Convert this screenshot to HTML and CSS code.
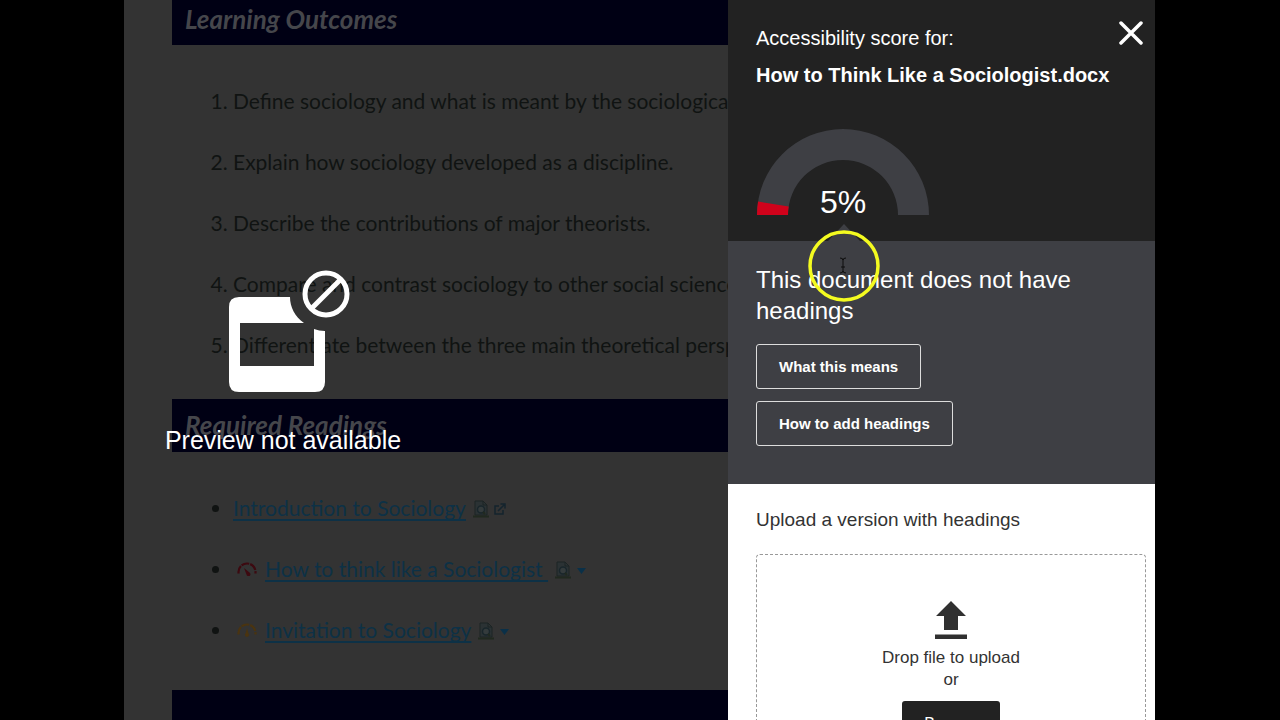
FILE: index.html
```html
<!DOCTYPE html>
<html lang="en">
<head>
<meta charset="utf-8">
<title>Accessibility score</title>
<link rel="stylesheet" href="styles.css">
</head>
<body>
<svg class="defs" aria-hidden="true">
  <symbol id="file" viewBox="0 0 16 18">
    <path d="M2 1h8l4 4v10H2z" fill="#2b3234" stroke="#1c2424"/>
    <path d="M10 1v4h4" fill="none" stroke="#1c2424"/>
    <circle cx="8" cy="9.500" r="3.500" fill="#343b3c" stroke="#19262b" stroke-width="1.500"/>
    <path d="M10 12l2 2M0 16.500h16" stroke="#20291f" stroke-width="2"/>
  </symbol>
  <symbol id="caret" viewBox="0 0 9 6"><path d="M0 0h9L4.500 6z" fill="#0a3048"/></symbol>
</svg>
<div class="stage">
  <main class="course">
    <section>
      <h2 class="bar bar-first">Learning Outcomes</h2>
      <ol class="list outcomes">
        <li>Define sociology and what is meant by the sociological</li>
        <li>Explain how sociology developed as a discipline.</li>
        <li>Describe the contributions of major theorists.</li>
        <li>Compare and contrast sociology to other social science</li>
        <li>Differentiate between the three main theoretical persp</li>
      </ol>
    </section>
    <section>
      <h2 class="bar">Required Readings</h2>
      <ul class="list readings">
        <li><div class="row"><a href="#intro">Introduction to Sociology</a>
          <svg class="file" aria-hidden="true"><use href="#file"/></svg>
          <svg class="ext" viewBox="0 0 12 12" aria-hidden="true"><path d="M5 3H1v8h8V7M4 8l6-6M6.500 1H11v4.500" fill="none" stroke="#14242e" stroke-width="1.500"/></svg></div></li>
        <li><div class="row"><svg class="gauge-icon" viewBox="0 0 20 14" aria-hidden="true"><path d="M1.500 11.500V10a8.500 8.500 0 0 1 17 0v1.500" fill="none" stroke="#3d0910" stroke-width="2.200" stroke-dasharray="8 1"/><path d="M7 6l5.500 4.500a2 2 0 1 1-3 2z" fill="#3d0910"/></svg>
          <a class="after-gauge trailing" href="#think">How to think like a Sociologist </a>
          <svg class="file" aria-hidden="true"><use href="#file"/></svg>
          <svg class="caret" aria-hidden="true"><use href="#caret"/></svg></div></li>
        <li><div class="row"><svg class="gauge-icon" viewBox="0 0 20 14" aria-hidden="true"><path d="M1.500 11.500V10a8.500 8.500 0 0 1 17 0v1.500" fill="none" stroke="#4a3410" stroke-width="2.200" stroke-dasharray="8 1"/><path d="M10 5l1.500 5.500a2 2 0 1 1-3 0z" fill="#4a3410"/></svg>
          <a class="after-gauge" href="#invite">Invitation to Sociology</a>
          <svg class="file" aria-hidden="true"><use href="#file"/></svg>
          <svg class="caret" aria-hidden="true"><use href="#caret"/></svg></div></li>
      </ul>
    </section>
    <div class="bar"></div>
    <div class="preview">
      <svg class="preview-icon" viewBox="0 0 122 124" aria-hidden="true">
        <path fill="#fff" fill-rule="evenodd" d="M10 27H61C61 37 66 47 75 53H11V96H85V59Q90 61 96 61V112Q96 122 86 122H10Q0 122 0 112V37Q0 27 10 27Z"/>
        <circle cx="97" cy="24" r="21" fill="none" stroke="#fff" stroke-width="5"/>
        <path d="M82 39l30-30" stroke="#fff" stroke-width="5"/>
      </svg>
      <p class="preview-text">Preview not available</p>
    </div>
  </main>
  <aside class="panel">
    <header class="score">
      <div class="score-top">
        <h1 class="score-title">Accessibility score for:<strong>How to Think Like a Sociologist.docx</strong></h1>
        <button class="close" type="button" aria-label="Close"><svg viewBox="0 0 24 24"><path d="M2 2l20 20M22 2L2 22" stroke="#fff" stroke-width="3.500" stroke-linecap="round"/></svg></button>
      </div>
      <div class="meter">
        <svg viewBox="0 0 172 86" aria-hidden="true">
          <path d="M0 86A86 86 0 0 1 172 86H141A55 55 0 0 0 31 86Z" fill="#3e3f44"/>
          <path d="M0 86A86 86 0 0 1 1.060 72.500L31.700 77.400A55 55 0 0 0 31 86Z" fill="#d0021b"/>
        </svg>
        <span class="percent">5%</span>
      </div>
    </header>
    <section class="issue">
      <h2 class="issue-title">This document does not have headings</h2>
      <button class="outline" type="button">What this means</button>
      <button class="outline" type="button">How to add headings</button>
    </section>
    <section class="upload">
      <h2 class="upload-title">Upload a version with headings</h2>
      <div class="drop">
        <svg class="upload-icon" viewBox="0 0 32 38" aria-hidden="true"><path d="M16 0L31 15H23V29H9V15H1ZM0 33.500H32V38H0Z" fill="#303030"/></svg>
        <p>Drop file to upload<br>or</p>
        <button class="browse" type="button">Browse</button>
      </div>
    </section>
    <svg class="cursor" viewBox="0 0 72 72" aria-hidden="true">
      <circle cx="36" cy="36" r="34" fill="none" stroke="#f4fb20" stroke-width="3.500"/>
      <path d="M32 28q3 0 3 2q0-2 3-2M32 43q3 0 3-2q0 2 3 2M35 29v13M33 37h4" fill="none" stroke="#0c0c0c"/>
    </svg>
  </aside>
</div>
</body>
</html>
```
FILE: styles.css
```css
* { box-sizing: border-box; }
body {
  margin: 0;
  height: 100vh;
  overflow: hidden;
  background: #000;
  font-family: "Liberation Sans", Arial, sans-serif;
}
h1, h2, p { margin: 0; font-weight: 400; }
button { font-family: inherit; cursor: pointer; }
svg { display: block; flex: none; }
.defs { display: none; }

.stage {
  display: grid;
  grid-template-columns: minmax(0, 1fr) 427px;
  height: 100%;
  padding: 0 125px 0 124px;
}

/* Dimmed course page */
.course {
  position: relative;
  overflow: hidden;
  padding-left: 48px;
  background: #333;
  color: #101312;
  font-family: Lato, sans-serif;
}
.bar {
  height: 53px;
  padding: 0 13px;
  background: #000014;
  color: #45464b;
  font-size: 26px;
  font-weight: 700;
  font-style: italic;
  line-height: 53px;
}
.bar-first { height: 45px; line-height: 38px; }
.list {
  display: flex;
  flex-direction: column;
  gap: 36px;
  margin: 0;
  padding: 43px 0 42px 61px;
  font-size: 21px;
  line-height: 25px;
  white-space: nowrap;
}
.readings { padding-bottom: 48px; }
.row { display: flex; align-items: baseline; height: 25px; }
.row svg { align-self: center; }
.readings a {
  color: #0d3146;
  text-decoration: underline;
  text-decoration-thickness: 2px;
  text-underline-offset: 3px;
  text-decoration-skip-ink: none;
}
.trailing { white-space: pre; }
.gauge-icon { width: 20px; height: 14px; margin-left: 4px; }
.after-gauge { margin-left: 8px; }
.file { width: 16px; height: 18px; margin: 3px 0 0 7px; }
.ext { width: 12px; height: 12px; margin: 3px 0 0 5px; }
.caret { width: 9px; height: 6px; margin: 5px 0 0 6px; }

.preview {
  position: absolute;
  top: 270px;
  left: 0;
  width: 318px;
  color: #fff;
  font-family: "Liberation Sans", Arial, sans-serif;
}
.preview-icon { width: 122px; height: 124px; margin: 0 auto 0 105px; }
.preview-text {
  margin-top: 30px;
  font-size: 25px;
  line-height: 32px;
  text-align: center;
}

/* Score panel */
.panel {
  position: relative;
  display: flex;
  flex-direction: column;
  overflow: hidden;
  background: #fff;
}
.score {
  position: relative;
  flex: none;
  padding: 20px 11px 26px 28px;
  background: #222;
  color: #fff;
}
.score::after {
  content: "";
  position: absolute;
  bottom: 0;
  left: 100px;
  border: solid transparent;
  border-width: 0 16px 17px;
  border-bottom-color: #3e3f44;
}
.score-top {
  display: flex;
  justify-content: space-between;
  align-items: flex-start;
  margin-bottom: 35px;
}
.score-title { font-size: 20px; line-height: 37px; }
.score-title strong { display: block; }
.close {
  width: 26px;
  height: 26px;
  padding: 1px;
  border: 0;
  background: none;
}
.meter { display: grid; width: 172px; margin-left: 1px; }
.meter svg, .percent { grid-area: 1 / 1; }
.percent {
  align-self: end;
  font-size: 32px;
  line-height: 26px;
  text-align: center;
}
.issue {
  display: flex;
  flex: none;
  flex-direction: column;
  align-items: flex-start;
  gap: 12px;
  padding: 23px 28px 38px;
  background: #3e3f44;
  color: #fff;
}
.issue-title { margin-bottom: 6px; font-size: 24px; line-height: 31px; }
.outline {
  height: 45px;
  padding: 0 22px;
  border: 1px solid #ddd;
  border-radius: 3px;
  background: none;
  color: #fff;
  font-size: 15px;
  font-weight: 700;
}
.upload { padding: 24px 9px 0 28px; color: #333; }
.upload-title { font-size: 19px; line-height: 24px; }
.drop {
  display: flex;
  flex-direction: column;
  align-items: center;
  margin-top: 22px;
  padding: 46px 0 40px;
  border: 1px dashed #999;
  border-radius: 4px;
  font-size: 17px;
  line-height: 22px;
  text-align: center;
}
.upload-icon { width: 32px; height: 38px; margin-bottom: 8px; }
.browse {
  height: 45px;
  margin-top: 10px;
  padding: 0 22px;
  border: 0;
  border-radius: 3px;
  background: #222;
  color: #fff;
  font-size: 16px;
}
.cursor {
  position: absolute;
  top: 230px;
  left: 80px;
  width: 72px;
  height: 72px;
}
```
